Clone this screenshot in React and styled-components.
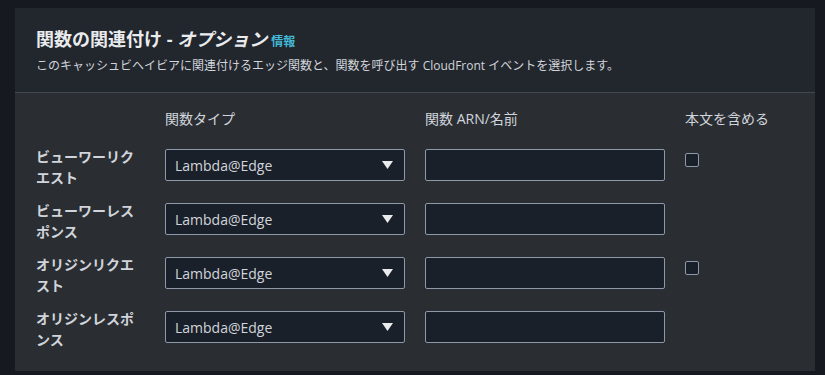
import { Fragment } from 'react';
import styled, { createGlobalStyle } from 'styled-components';

const GlobalStyle = createGlobalStyle`
  html, body {
    margin: 0;
    padding: 0;
    background: #16191f;
    font-family: "Open Sans", "Noto Sans CJK JP", sans-serif;
    color: #d1d5db;
  }
`;

const Page = styled.div`
  padding: 8px 10px 4px 15px;
`;

const Card = styled.section`
  background: #2a2e33;
  width: 800px;
`;

const Header = styled.header`
  background: #22262d;
  border-bottom: 1px solid #414750;
  padding: 19px 21px 0;
  height: 85px;
  box-sizing: border-box;
`;

const Title = styled.h2`
  margin: 0;
  font-size: 18px;
  line-height: 24px;
  font-weight: 700;
  color: #e9ebed;
  display: flex;
  align-items: baseline;
  gap: 4px;
  em {
    font-style: italic;
  }
`;

const InfoLink = styled.a`
  font-size: 12px;
  font-weight: 700;
  color: #44b9d6;
  text-decoration: none;
`;

const Description = styled.p`
  margin: 3px 0 0;
  font-size: 12px;
  line-height: 18px;
  color: #d1d5db;
`;

const Body = styled.div`
  padding: 16px 21px 21px;
  display: grid;
  grid-template-columns: 109px 240px 240px auto;
  column-gap: 20px;
  row-gap: 15px;
  align-items: start;
`;

const ColumnHead = styled.div`
  font-size: 14px;
  line-height: 20px;
  color: #d1d5db;
  margin-bottom: 5px;
`;

const RowLabel = styled.div`
  font-size: 14px;
  font-weight: 700;
  line-height: 21px;
  color: #d1d5db;
  width: 104px;
  margin-top: -3px;
`;

const SelectBox = styled.div`
  height: 32px;
  box-sizing: border-box;
  border: 1px solid #8d99a8;
  border-radius: 2px;
  background: #1a2029;
  display: flex;
  align-items: center;
  justify-content: space-between;
  padding: 0 11px 0 9px;
  font-size: 14px;
  color: #d1d5db;
`;

const Arrow = styled.svg`
  width: 11px;
  height: 8px;
  fill: #e9ebed;
`;

const TextInput = styled.input`
  height: 32px;
  box-sizing: border-box;
  border: 1px solid #8d99a8;
  border-radius: 2px;
  background: #1a2029;
  margin: 0;
  width: 240px;
  color: #d1d5db;
`;

const CheckCell = styled.div`
  padding-top: 4px;
`;

const Check = styled.span`
  display: block;
  width: 14px;
  height: 14px;
  box-sizing: border-box;
  border: 1px solid #8d99a8;
  border-radius: 2px;
  background: #1a2029;
`;

const rows = [
  { label: 'ビューワーリクエスト', body: true },
  { label: 'ビューワーレスポンス', body: false },
  { label: 'オリジンリクエスト', body: true },
  { label: 'オリジンレスポンス', body: false },
];

export default function App() {
  return (
    <Page>
      <GlobalStyle />
      <Card>
        <Header>
          <Title>
            <span>
              関数の関連付け - <em>オプション</em>
            </span>
            <InfoLink href="#">情報</InfoLink>
          </Title>
          <Description>
            このキャッシュビヘイビアに関連付けるエッジ関数と、関数を呼び出す CloudFront イベントを選択します。
          </Description>
        </Header>
        <Body>
          <div />
          <ColumnHead>関数タイプ</ColumnHead>
          <ColumnHead>関数 ARN/名前</ColumnHead>
          <ColumnHead>本文を含める</ColumnHead>
          {rows.map((r) => (
            <Fragment key={r.label}>
              <RowLabel>{r.label}</RowLabel>
              <SelectBox>
                Lambda@Edge
                <Arrow viewBox="0 0 11 8">
                  <path d="M0 0h11L5.5 8z" />
                </Arrow>
              </SelectBox>
              <TextInput />
              <CheckCell>{r.body && <Check />}</CheckCell>
            </Fragment>
          ))}
        </Body>
      </Card>
    </Page>
  );
}
